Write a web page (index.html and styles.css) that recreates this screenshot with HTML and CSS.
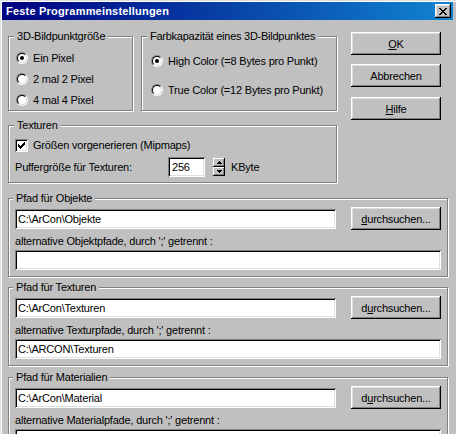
FILE: index.html
```html
<!DOCTYPE html>
<html lang="de">
<head>
<meta charset="utf-8">
<title>Feste Programmeinstellungen</title>
<link rel="stylesheet" href="styles.css">
</head>
<body>
<div class="window">
  <div class="titlebar">
    <span class="title">Feste Programmeinstellungen</span>
    <button class="close" type="button" aria-label="Schließen">
      <svg width="8" height="7" viewBox="0 0 8 7" shape-rendering="crispEdges"><path d="M0 0h2v1h-2zM6 0h2v1h-2zM1 1h2v1h-2zM5 1h2v1h-2zM2 2h4v1h-4zM3 3h2v1h-2zM2 4h4v1h-4zM1 5h2v1h-2zM5 5h2v1h-2zM0 6h2v1h-2zM6 6h2v1h-2z" fill="#000"/></svg>
    </button>
  </div>
  <div class="client">
    <div class="top">
      <div class="left">
        <div class="row">
          <div class="group g-size">
            <div class="legend">3D-Bildpunktgröße</div>
            <div class="opt"><span class="radio"><span class="radio-in"><span class="dot"></span></span></span><span class="lbl">Ein Pixel</span></div>
            <div class="opt"><span class="radio"><span class="radio-in"></span></span><span class="lbl">2 mal 2 Pixel</span></div>
            <div class="opt"><span class="radio"><span class="radio-in"></span></span><span class="lbl">4 mal 4 Pixel</span></div>
          </div>
          <div class="group g-color">
            <div class="legend">Farbkapazität eines 3D-Bildpunktes</div>
            <div class="opt opt-wide"><span class="radio"><span class="radio-in"><span class="dot"></span></span></span><span class="lbl">High Color (=8 Bytes pro Punkt)</span></div>
            <div class="opt opt-wide"><span class="radio"><span class="radio-in"></span></span><span class="lbl">True Color (=12 Bytes pro Punkt)</span></div>
          </div>
        </div>
        <div class="group g-tex">
          <div class="legend">Texturen</div>
          <div class="chk-row">
            <span class="check"><svg width="7" height="7" viewBox="0 0 7 7" shape-rendering="crispEdges"><path d="M0 2h1v3h-1zM1 3h1v3h-1zM2 4h1v3h-1zM3 3h1v3h-1zM4 2h1v3h-1zM5 1h1v3h-1zM6 0h1v3h-1z" fill="#000"/></svg></span>
            <span class="lbl">Größen vorgenerieren (Mipmaps)</span>
          </div>
          <div class="buf-row">
            <span class="buf-lbl">Puffergröße für Texturen:</span>
            <span class="field field-num">256</span>
            <span class="spin">
              <span class="spin-btn"><svg width="5" height="3" viewBox="0 0 5 3" shape-rendering="crispEdges"><path d="M2 0h1v1h-1zM1 1h3v1h-3zM0 2h5v1h-5z" fill="#000"/></svg></span>
              <span class="spin-btn"><svg width="5" height="3" viewBox="0 0 5 3" shape-rendering="crispEdges"><path d="M0 0h5v1h-5zM1 1h3v1h-3zM2 2h1v1h-1z" fill="#000"/></svg></span>
            </span>
            <span class="unit">KByte</span>
          </div>
        </div>
      </div>
      <div class="buttons">
        <button class="btn btn-ok" type="button"><u>O</u>K</button>
        <button class="btn btn-cancel" type="button">Abbrechen</button>
        <button class="btn btn-help" type="button"><u>H</u>ilfe</button>
      </div>
    </div>

    <div class="group path">
      <div class="legend">Pfad für Objekte</div>
      <div class="path-row">
        <span class="field field-path">C:\ArCon\Objekte</span>
        <button class="btn btn-browse" type="button"><u>d</u>urchsuchen...</button>
      </div>
      <div class="alt-lbl">alternative Objektpfade, durch ';' getrennt :</div>
      <span class="field field-alt"></span>
    </div>

    <div class="group path">
      <div class="legend">Pfad für Texturen</div>
      <div class="path-row">
        <span class="field field-path">C:\ArCon\Texturen</span>
        <button class="btn btn-browse" type="button">d<u>u</u>rchsuchen...</button>
      </div>
      <div class="alt-lbl">alternative Texturpfade, durch ';' getrennt :</div>
      <span class="field field-alt">C:\ARCON\Texturen</span>
    </div>

    <div class="group path path-last">
      <div class="legend">Pfad für Materialien</div>
      <div class="path-row">
        <span class="field field-path">C:\ArCon\Material</span>
        <button class="btn btn-browse" type="button">d<u>u</u>rchsuchen...</button>
      </div>
      <div class="alt-lbl">alternative Materialpfade, durch ';' getrennt :</div>
      <span class="field field-alt"></span>
    </div>
  </div>
</div>
</body>
</html>
```
FILE: styles.css
```css
* { box-sizing: border-box; }
html, body { margin: 0; padding: 0; }
body {
  background: #c0c0c0;
  font-family: "Liberation Sans", Arial, sans-serif;
  font-size: 11px;
  color: #000;
  letter-spacing: -0.2px;
}
.window {
  width: 456px;
  height: 434px;
  overflow: hidden;
  background: #c0c0c0;
  padding: 2px 3px 0 2px;
  box-shadow: inset 1px 1px #dfdfdf, inset 2px 2px #fff;
}
.titlebar {
  height: 18px;
  display: flex;
  align-items: center;
  padding: 0 2px 0 4px;
  background: linear-gradient(to right, #000080, #1084d0);
  color: #fff;
  font-weight: bold;
  letter-spacing: 0.2px;
}
.close {
  margin-left: auto;
  width: 16px;
  height: 14px;
  padding: 0;
  border: 0;
  background: #c0c0c0;
  display: flex;
  align-items: center;
  justify-content: center;
  box-shadow: inset -1px -1px #000, inset 1px 1px #fff, inset -2px -2px #808080, inset 2px 2px #dfdfdf;
}
.close svg { display: block; margin-left: -1px; }
.client { padding: 0 5px 0 6px; }
.top { display: flex; align-items: flex-start; padding-top: 12px; }
.left { margin-top: 4px; width: 329px; }
.row { display: flex; gap: 8px; }
.group {
  border: 1px solid #808080;
  box-shadow: inset 1px 1px #fff, 1px 1px #fff;
}
.legend {
  display: table;
  margin: -7px 0 0 5px;
  padding: 0 3px;
  line-height: 13px;
  background: #c0c0c0;
  white-space: nowrap;
}
.g-size { width: 125px; height: 75px; }
.g-color { width: 196px; height: 75px; }
.g-size .legend { margin-bottom: 4px; }
.g-color .legend { margin-bottom: 4px; letter-spacing: -0.25px; }
.opt {
  display: flex;
  align-items: center;
  height: 21px;
  padding-left: 7px;
  white-space: nowrap;
}
.opt-wide { height: 28px; padding-left: 9px; }
.opt-wide + .opt-wide { margin-top: 1px; }
.radio {
  width: 12px;
  height: 12px;
  flex: none;
  border-radius: 50%;
  border: 1px solid;
  border-color: #808080 #fff #fff #808080;
}
.radio-in {
  display: flex;
  align-items: center;
  justify-content: center;
  width: 10px;
  height: 10px;
  border-radius: 50%;
  border: 1px solid;
  border-color: #000 #dfdfdf #dfdfdf #000;
  background: #fff;
}
.dot { width: 4px; height: 4px; border-radius: 50%; background: #000; }
.lbl { margin-left: 5px; }

.g-tex { margin-top: 14px; height: 58px; padding: 0 6px; }
.g-tex .legend { margin-left: -1px; }
.chk-row { display: flex; align-items: center; height: 20px; margin-top: 3px; }
.check {
  width: 13px;
  height: 13px;
  flex: none;
  background: #fff;
  display: flex;
  align-items: center;
  justify-content: center;
  box-shadow: inset 1px 1px #808080, inset -1px -1px #fff, inset 2px 2px #000, inset -2px -2px #dfdfdf;
}
.check svg { display: block; }
.buf-row { display: flex; align-items: center; height: 20px; margin-top: 2px; }
.buf-lbl { width: 153px; flex: none; }
.field {
  display: block;
  background: #fff;
  height: 20px;
  line-height: 20px;
  padding: 0 3px;
  white-space: nowrap;
  overflow: hidden;
  box-shadow: inset 1px 1px #808080, inset -1px -1px #fff, inset 2px 2px #000, inset -2px -2px #dfdfdf;
}
.field-num { width: 37px; flex: none; padding-left: 4px; }
.spin {
  display: flex;
  flex-direction: column;
  width: 12px;
  height: 18px;
  margin-left: 8px;
  flex: none;
}
.spin-btn {
  height: 9px;
  display: flex;
  align-items: center;
  justify-content: center;
  background: #c0c0c0;
  box-shadow: inset -1px -1px #000, inset 1px 1px #fff, inset -2px -2px #808080, inset 1px 1px #dfdfdf;
}
.spin-btn svg { display: block; }
.unit { margin-left: 6px; }

.buttons { display: flex; flex-direction: column; margin-left: 14px; }
.btn {
  width: 90px;
  height: 23px;
  padding: 0;
  border: 0;
  background: #c0c0c0;
  font: inherit;
  letter-spacing: inherit;
  color: #000;
  box-shadow: inset -1px -1px #000, inset 1px 1px #fff, inset -2px -2px #808080, inset 2px 2px #dfdfdf;
}
.btn u { text-underline-offset: 1px; }
.btn-cancel { margin-top: 9px; }
.btn-help { margin-top: 10px; }

.path { height: 79px; margin-top: 10px; padding: 0 6px; }
.top + .path { margin-top: 15px; }
.path-last { margin-top: 11px; }
.path .legend { margin-left: -2px; }
.path-row { display: flex; align-items: flex-start; margin-top: 2px; }
.field-path { width: 321px; margin-top: 2px; flex: none; }
.btn-browse { margin-left: auto; flex: none; }
.alt-lbl { margin-top: 5px; line-height: 13px; white-space: nowrap; }
.field-alt { margin-top: 2px; width: 100%; }
```
